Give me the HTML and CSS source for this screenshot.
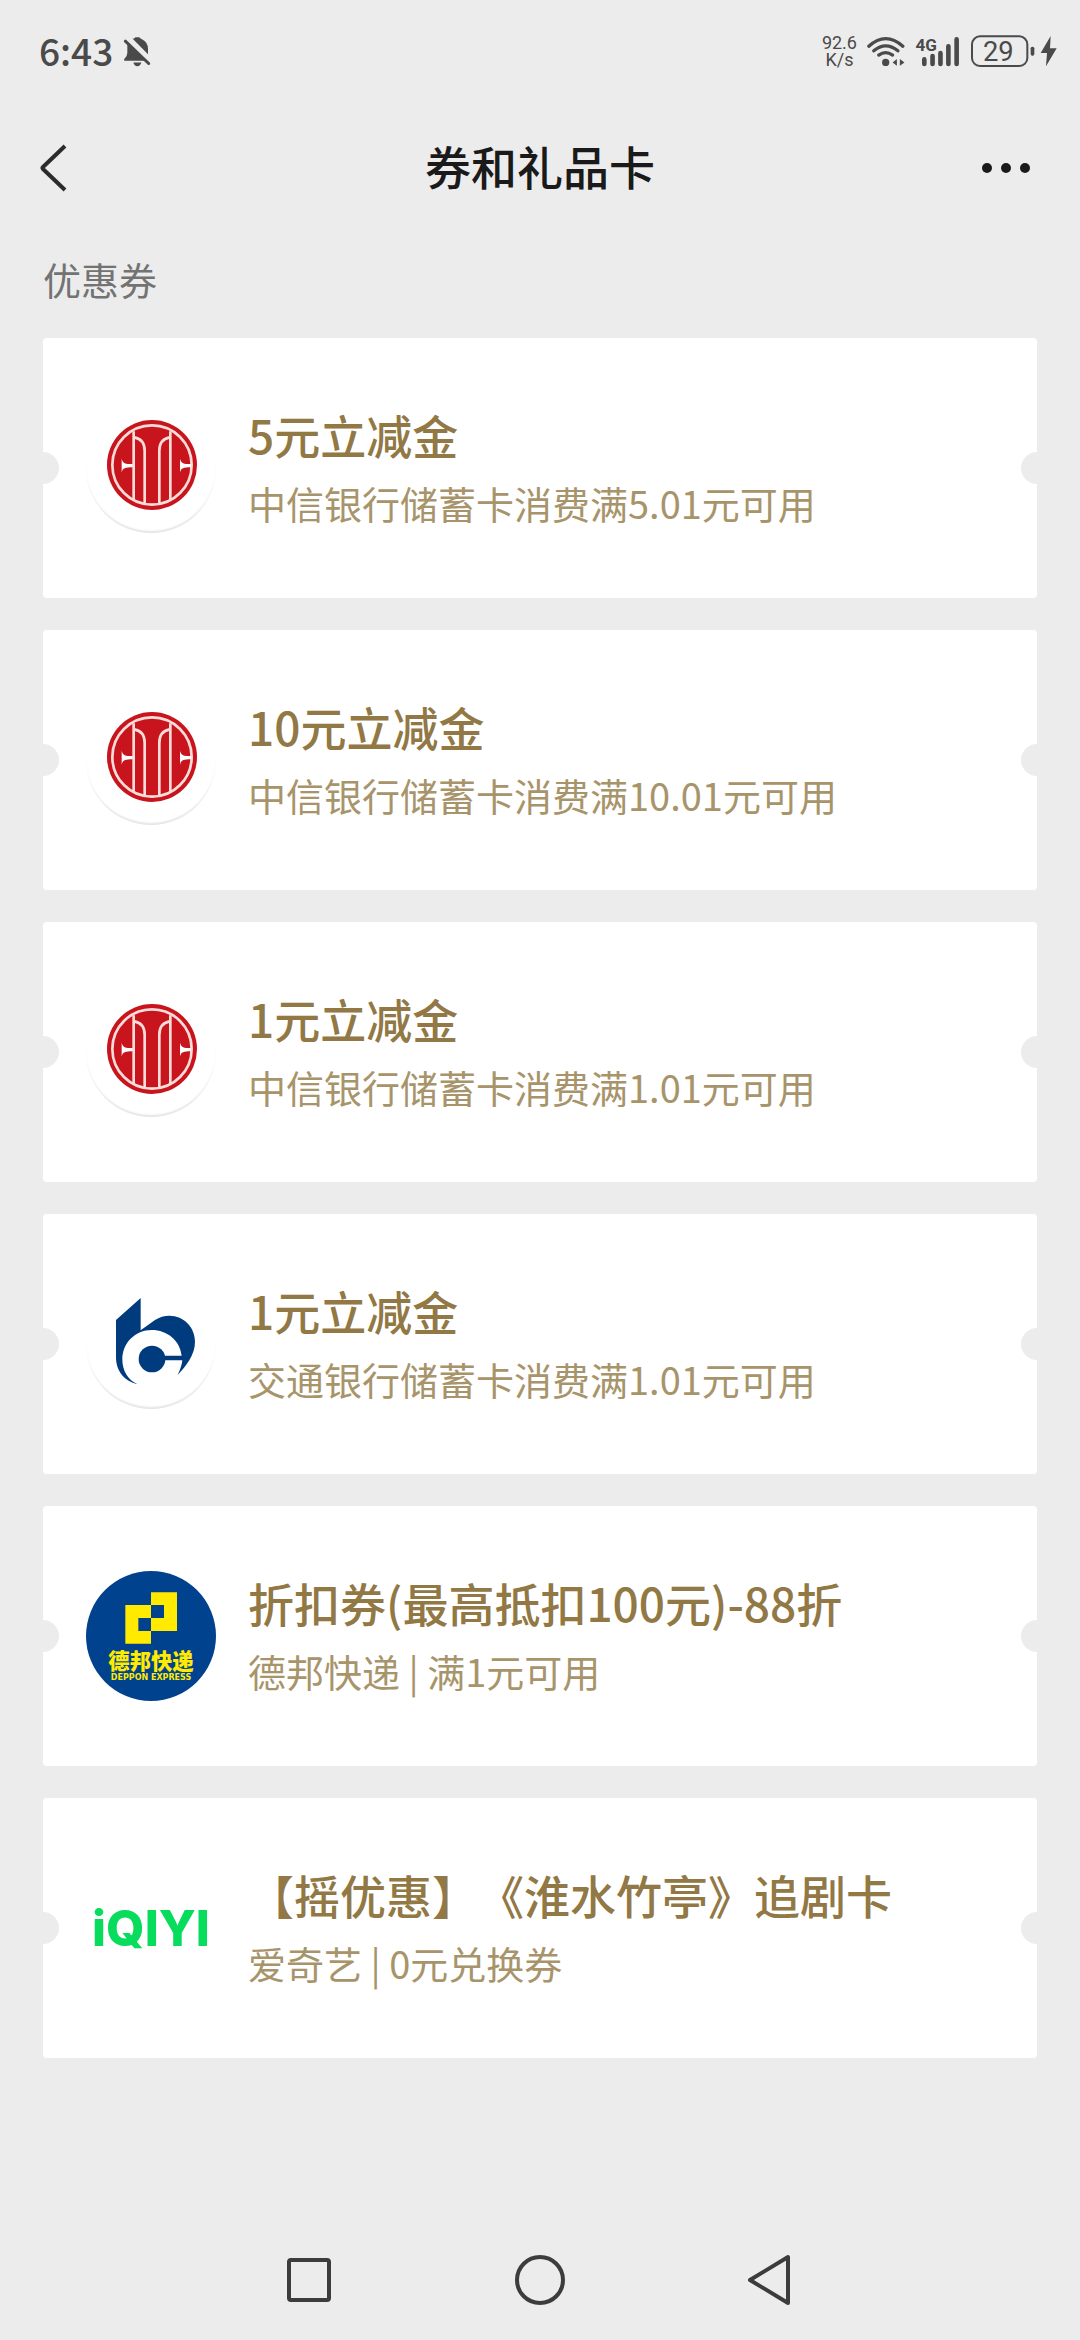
FILE: index.html
```
<!DOCTYPE html>
<html lang="zh-CN">
<head>
  <meta charset="utf-8">
  <meta name="viewport" content="width=device-width, initial-scale=1">
  <title>券和礼品卡</title>
  <link rel="stylesheet" href="styles.css">
</head>
<body>
  <!-- shared logos -->
  <svg class="symbols" aria-hidden="true">
    <symbol id="logo-citic" viewBox="-12 9 390 390">
      <circle cx="186" cy="195" r="135" fill="#c8151d"/>
      <g fill="none" stroke="#fbdcd8" stroke-width="8">
        <circle cx="186" cy="195" r="119"/>
        <path d="M131 94V299M241 94V299"/>
        <path d="M133 112Q164 118 164 152V310M239 112Q208 118 208 152V310"/>
      </g>
      <path d="M95 176C98 190 106 192 128 192V202C106 202 98 204 95 218Z" fill="#fff"/>
      <path d="M270 176C273 190 281 192 303 192V202C281 202 273 204 270 218Z" fill="#fff"/>
    </symbol>
  </svg>

  <div class="status-bar">
    <div class="status-left">
      <span class="time">6:43</span>
      <svg class="bell-icon" viewBox="306 48 84 92">
        <path d="M335 56Q342 54 343 51H355Q356 54 363 57Q381 66 381 86V102Z" fill="#4a4a4a"/>
        <path d="M319 72L372 122H310Q308 117 311 115Q319 108 319 98ZM337 127H361Q358 138 349 138Q340 138 337 127Z" fill="#4a4a4a"/>
        <path d="M313 63L383 130" stroke="#4a4a4a" stroke-width="9" stroke-linecap="round"/>
      </svg>
    </div>
    <div class="status-right">
      <div class="net-speed"><span>92.6</span><span>K/s</span></div>
      <svg class="wifi-icon" viewBox="173 44 114 94">
        <g fill="none" stroke="#4a4a4a" stroke-width="10" stroke-linecap="round">
          <path d="M178 75Q229 29 281 75"/>
          <path d="M193 89Q229 59 266 89"/>
          <path d="M208 102Q229 87 250 102"/>
        </g>
        <circle cx="229" cy="124" r="11" fill="#4a4a4a"/>
        <path d="M263 114V134L250 124ZM272 114V134L286 124Z" fill="#4a4a4a"/>
      </svg>
      <svg class="signal-icon" viewBox="318 44 136 94">
        <path d="M346 115V129M371 105V129M395 96V129M419 75V129M444 54V129" stroke="#4a4a4a" stroke-width="14" stroke-linecap="round"/>
        <text x="319" y="90" class="signal-text">4G</text>
      </svg>
      <svg class="battery-icon" viewBox="483 40 264 102">
        <rect x="489" y="47" width="166" height="89" rx="24" fill="none" stroke="#4a4a4a" stroke-width="6"/>
        <rect x="665" y="78" width="11" height="27" rx="5" fill="#4a4a4a"/>
        <path d="M725 46L695 97H714L711 137L743 83H723Z" fill="#4a4a4a"/>
        <text x="568" y="120" class="battery-text">29</text>
      </svg>
    </div>
  </div>

  <header class="header">
    <button class="icon-btn" aria-label="返回">
      <svg width="32" height="54" viewBox="0 0 32 54"><path d="M27 5L5 26Q4 27 5 28L27 49" fill="none" stroke="#2b2b2b" stroke-width="4"/></svg>
    </button>
    <h1 class="title">券和礼品卡</h1>
    <button class="icon-btn icon-btn-more" aria-label="更多">
      <svg width="62" height="54" viewBox="0 0 62 54"><g fill="#1a1a1a"><circle cx="7" cy="27" r="5"/><circle cx="26" cy="27" r="5"/><circle cx="45" cy="27" r="5"/></g></svg>
    </button>
  </header>

  <main class="content">
    <h2 class="section-title">优惠券</h2>
    <ul class="coupon-list">
      <li>
        <a class="coupon" href="#">
          <svg class="logo logo-round"><use href="#logo-citic"/></svg>
          <div class="coupon-info">
            <div class="coupon-name">5元立减金</div>
            <div class="coupon-desc">中信银行储蓄卡消费满5.01元可用</div>
          </div>
        </a>
      </li>
      <li>
        <a class="coupon" href="#">
          <svg class="logo logo-round"><use href="#logo-citic"/></svg>
          <div class="coupon-info">
            <div class="coupon-name">10元立减金</div>
            <div class="coupon-desc">中信银行储蓄卡消费满10.01元可用</div>
          </div>
        </a>
      </li>
      <li>
        <a class="coupon" href="#">
          <svg class="logo logo-round"><use href="#logo-citic"/></svg>
          <div class="coupon-info">
            <div class="coupon-name">1元立减金</div>
            <div class="coupon-desc">中信银行储蓄卡消费满1.01元可用</div>
          </div>
        </a>
      </li>
      <li>
        <a class="coupon" href="#">
          <svg class="logo logo-round" viewBox="18 27 390 390">
            <path d="M108 150L182 84V181L225 150Q245 137 268 137C312 137 345 172 345 215C345 255 318 288 293 315Q305 290 307 271H250V257H305C300 212 262 180 215 180C166 180 127 219 127 268C127 302 143 330 172 342C135 335 108 305 108 262Z" fill="#003b7e"/>
            <circle cx="216" cy="267" r="40" fill="#003b7e"/>
          </svg>
          <div class="coupon-info">
            <div class="coupon-name">1元立减金</div>
            <div class="coupon-desc">交通银行储蓄卡消费满1.01元可用</div>
          </div>
        </a>
      </li>
      <li>
        <a class="coupon" href="#">
          <svg class="logo" viewBox="18 33 390 390">
            <circle cx="213" cy="228" r="195" fill="#00428e"/>
            <path d="M136 135H213V97H291V213H213V251H136ZM213 135V174H252V135ZM175 174V213H213V174Z" fill="#ffea00" fill-rule="evenodd"/>
            <text x="213" y="326" class="deppon-cn">德邦快递</text>
            <text x="213" y="360" class="deppon-en">DEPPON EXPRESS</text>
          </svg>
          <div class="coupon-info">
            <div class="coupon-name">折扣券(最高抵扣100元)-88折</div>
            <div class="coupon-desc">德邦快递 | 满1元可用</div>
          </div>
        </a>
      </li>
      <li>
        <a class="coupon" href="#">
          <svg class="logo" viewBox="18 -51 390 390">
            <text x="213" y="197" class="iqiyi-text">iQIYI</text>
          </svg>
          <div class="coupon-info">
            <div class="coupon-name">【摇优惠】《淮水竹亭》追剧卡</div>
            <div class="coupon-desc">爱奇艺 | 0元兑换券</div>
          </div>
        </a>
      </li>
    </ul>
  </main>

  <nav class="nav-bar">
    <button class="nav-btn" aria-label="最近任务">
      <svg width="60" height="60" viewBox="0 0 60 60"><rect x="10" y="10" width="40" height="40" rx="2"/></svg>
    </button>
    <button class="nav-btn" aria-label="主页">
      <svg width="60" height="60" viewBox="0 0 60 60"><circle cx="30" cy="30" r="23"/></svg>
    </button>
    <button class="nav-btn" aria-label="返回上一级">
      <svg width="60" height="60" viewBox="0 0 60 60"><path d="M47 7V53L9 30Z"/></svg>
    </button>
  </nav>
</body>
</html>
```
FILE: styles.css
```
* {
  box-sizing: border-box;
}

body {
  margin: 0;
  min-height: 100vh;
  display: flex;
  flex-direction: column;
  background: #ececec;
  font-family: "Noto Sans CJK SC", sans-serif;
  text-spacing-trim: space-all;
}

button {
  display: flex;
  padding: 0;
  border: none;
  background: none;
  cursor: pointer;
}

.symbols {
  display: none;
}

/* status bar */
.status-bar {
  display: flex;
  justify-content: space-between;
  align-items: center;
  height: 102px;
  padding: 0 22px 0 39px;
  color: #4a4a4a;
}

.status-left,
.status-right {
  display: flex;
  align-items: center;
  gap: 10px;
}

.time {
  padding-bottom: 2px;
  font-size: 37px;
  font-weight: 500;
  line-height: 40px;
}

.bell-icon {
  width: 28px;
  height: 31px;
}

.net-speed {
  display: flex;
  flex-direction: column;
  align-items: center;
  font-family: Roboto, sans-serif;
  font-size: 18px;
  line-height: 17px;
}

.wifi-icon {
  width: 38px;
  height: 31px;
}

.signal-icon {
  width: 45px;
  height: 31px;
}

.signal-text {
  fill: #4a4a4a;
  font-family: Roboto, sans-serif;
  font-size: 52px;
  font-weight: 700;
}

.battery-icon {
  width: 88px;
  height: 34px;
  overflow: visible;
}

.battery-text {
  fill: #4a4a4a;
  font-family: Roboto, sans-serif;
  font-size: 82px;
  text-anchor: middle;
}

/* header */
.header {
  display: grid;
  grid-template-columns: 1fr auto 1fr;
  align-items: center;
  height: 132px;
  padding: 0 38px;
}

.icon-btn-more {
  justify-self: end;
}

.title {
  margin: 0;
  padding-bottom: 6px;
  color: #1a1a1a;
  font-size: 46px;
  font-weight: 500;
  line-height: 66px;
}

/* coupons */
.content {
  flex: 1;
  padding: 0 43px;
}

.section-title {
  margin: 0 0 14px;
  color: #737373;
  font-size: 38px;
  font-weight: 400;
  line-height: 90px;
}

.coupon-list {
  display: flex;
  flex-direction: column;
  gap: 32px;
  margin: 0;
  padding: 0;
  list-style: none;
}

.coupon {
  position: relative;
  display: flex;
  align-items: center;
  gap: 32px;
  min-height: 260px;
  padding: 0 43px;
  border-radius: 4px;
  background: #fff;
  text-decoration: none;
}

/* ticket notches */
.coupon::before,
.coupon::after {
  content: "";
  position: absolute;
  top: 50%;
  width: 32px;
  height: 32px;
  margin-top: -16px;
  border-radius: 50%;
  background: #ececec;
}

.coupon::before {
  left: -16px;
}

.coupon::after {
  right: -16px;
}

.logo {
  flex-shrink: 0;
  width: 130px;
  height: 130px;
}

.logo-round {
  border-radius: 50%;
  box-shadow: inset 0 -3px 2px -1px #e4e4e4;
}

.coupon-info {
  padding-bottom: 4px;
}

.coupon-name {
  color: #917845;
  font-size: 46px;
  font-weight: 500;
  line-height: 74px;
}

.coupon-desc {
  color: #a8946a;
  font-size: 38px;
  line-height: 64px;
}

.deppon-cn {
  fill: #ffea00;
  font-size: 64px;
  font-weight: 900;
  text-anchor: middle;
}

.deppon-en {
  fill: #ffea00;
  font-family: "DejaVu Sans", sans-serif;
  font-size: 24px;
  font-weight: 700;
  text-anchor: middle;
}

.iqiyi-text {
  fill: #08dc5c;
  font-family: Inter, sans-serif;
  font-size: 148px;
  font-weight: 800;
  text-anchor: middle;
}

/* system navigation */
.nav-bar {
  display: flex;
  justify-content: center;
  align-items: center;
  gap: 171px;
  height: 120px;
}

.nav-btn svg {
  fill: none;
  stroke: #3c3c3c;
  stroke-width: 4;
  stroke-linejoin: round;
}
```
